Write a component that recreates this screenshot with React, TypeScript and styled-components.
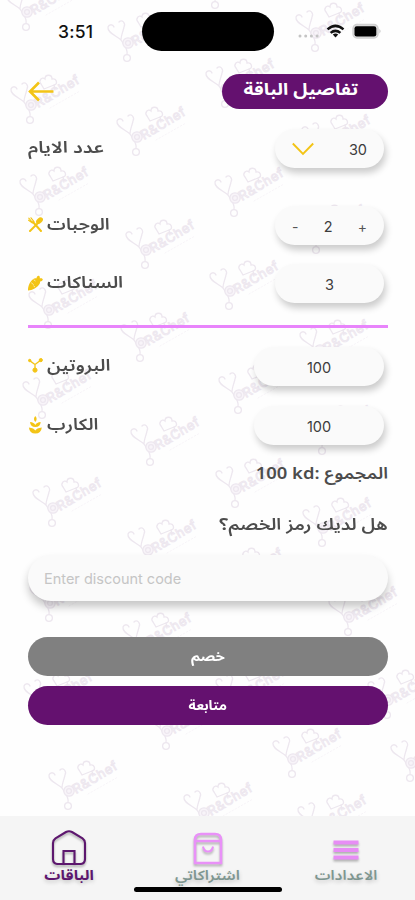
import React from "react";
import styled, { createGlobalStyle } from "styled-components";

const ARABIC = '"Noto Sans Arabic", "Noto Sans", sans-serif';

const GlobalStyle = createGlobalStyle`
  * { box-sizing: border-box; }
  body { margin: 0; background: #fff; }
  button, input { font: inherit; border: 0; padding: 0; }
`;

const Screen = styled.div`
  position: relative;
  width: 415px;
  height: 900px;
  overflow: hidden;
  display: flex;
  flex-direction: column;
  background: #fefefe;
  font-family: Inter, "Liberation Sans", sans-serif;
  color: #444;
`;

const Pattern = styled.svg`
  position: absolute;
  inset: 0;
  width: 415px;
  height: 900px;
  pointer-events: none;
`;

const StatusBar = styled.div`
  position: relative;
  display: grid;
  grid-template-columns: 142px 132px 1fr;
  align-items: center;
  height: 39px;
  margin-top: 12px;
`;

const Time = styled.div`
  padding-left: 58px;
  font-size: 17.5px;
  font-weight: 500;
  letter-spacing: 0.2px;
  color: #111;
`;

const Island = styled.div`
  height: 39px;
  border-radius: 20px;
  background: #000;
`;

const StatusIcons = styled.div`
  padding-left: 24px;
  height: 39px;
`;

const Content = styled.main`
  position: relative;
  flex: 1;
  display: flex;
  flex-direction: column;
  padding: 23px 27px 0 28px;
`;

const Header = styled.header`
  display: flex;
  justify-content: space-between;
  height: 35px;
  margin-bottom: 20px;
`;

const BackButton = styled.button`
  width: 27px;
  height: 35px;
  background: none;
`;

const TitlePill = styled.h1`
  margin: 0;
  width: 166px;
  height: 35px;
  padding-right: 9px;
  border-radius: 18px;
  background: #64116f;
  color: #fff;
  display: flex;
  justify-content: center;
  align-items: center;
`;

const Fit = styled.span<{ $size: number; $x?: number; $up?: number; $origin?: string; $weight?: number }>`
  display: inline-block;
  direction: rtl;
  white-space: nowrap;
  font-family: ${ARABIC};
  font-size: ${(p) => p.$size}px;
  font-weight: ${(p) => p.$weight ?? 600};
  line-height: 26px;
  transform: translateY(${(p) => -(p.$up ?? 0)}px) scaleX(${(p) => p.$x ?? 1});
  transform-origin: ${(p) => p.$origin ?? "center"};
`;

const Row = styled.div<{ $gap: number }>`
  display: flex;
  justify-content: space-between;
  height: 39px;
  padding-right: 4px;
  margin-bottom: ${(p) => p.$gap}px;
`;

const Label = styled.div`
  display: flex;
  align-items: center;
  gap: 4px;
  height: 37px;
  color: #4c4c4c;
  svg { flex: none; }
`;

const Pill = styled.div<{ $wide?: boolean; $spread?: boolean }>`
  display: flex;
  align-items: center;
  justify-content: ${(p) => (p.$spread ? "space-between" : "center")};
  width: ${(p) => (p.$wide ? 130 : 109)}px;
  height: 39px;
  padding: 1px 17px 0;
  border-radius: 20px;
  background: #fafafa;
  box-shadow: 2px 5px 7px rgba(0, 0, 0, 0.2);
  font-size: 14.5px;
  color: #3c3c3c;
`;

const Step = styled.button`
  background: none;
  color: #555;
  font-size: 14px;
`;

const Divider = styled.hr`
  width: 360px;
  height: 3px;
  margin: 0 0 19px;
  border: 0;
  flex: none;
  background: #e884fb;
`;

const Line = styled.div<{ $gap: number }>`
  display: flex;
  justify-content: flex-end;
  align-items: center;
  height: 26px;
  margin-bottom: ${(p) => p.$gap}px;
  color: #4c4c4c;
`;

const CodeInput = styled.input`
  width: 360px;
  height: 46px;
  padding: 0 16px;
  margin-bottom: 36px;
  border-radius: 23px;
  background: #fafafa;
  box-shadow: 0 6px 8px rgba(0, 0, 0, 0.22);
  font-size: 14.5px;
  outline: none;
  &::placeholder { color: #c5c5c5; opacity: 1; }
`;

const Action = styled.button<{ $color: string }>`
  width: 360px;
  height: 39px;
  margin-bottom: 10px;
  border-radius: 20px;
  background: ${(p) => p.$color};
  color: #fff;
`;

const TabBar = styled.nav`
  position: relative;
  display: grid;
  grid-template-columns: repeat(3, 138.5px);
  height: 84px;
  background: #f5f5f5;
`;

const Tab = styled.a<{ $color: string }>`
  display: flex;
  flex-direction: column;
  align-items: center;
  padding-top: 13px;
  color: ${(p) => p.$color};
  text-shadow: 0 2px 4px rgba(0, 0, 0, 0.2);
  svg { filter: drop-shadow(0 2px 1px rgba(0, 0, 0, 0.28)); flex: none; }
`;

const HomeIndicator = styled.div`
  position: absolute;
  left: 134px;
  bottom: 8px;
  width: 148px;
  height: 5px;
  border-radius: 3px;
  background: #000;
`;

const marks: [number, number][] = [
  [26, 27], [127, 58], [215, 5], [315, 48], [30, 120], [225, 104], [136, 152], [321, 160],
  [39, 212], [234, 213], [145, 265], [316, 250], [229, 306], [48, 325], [140, 358], [319, 365],
  [42, 415], [238, 410], [150, 462], [322, 451], [52, 523], [235, 504], [147, 565], [322, 543],
  [49, 618], [233, 593], [142, 658], [348, 632], [43, 717], [235, 712], [166, 746], [387, 715],
  [292, 774], [410, 778], [68, 806], [203, 828], [317, 840],
];

function Watermark() {
  return (
    <Pattern viewBox="0 0 415 900">
      <defs>
        <g id="mark" fill="none" stroke="#ede7ef" strokeWidth="1.3" strokeLinecap="round">
          <circle cx="0" cy="0" r="3.4" />
          <path d="M0-4C1-10-3-13-6-18M-8-36C-5-39-1-35-3-31C-4-26-6-23-6-18C-10-22-20-25-19-31C-18-34-14-34-13-31" />
          <circle cx="1" cy="-15" r="5.2" fill="#f8f4f9" />
          <circle cx="1" cy="-15" r="2.4" />
          <path d="M14-31L11-36C8-39 12-44 15-41C15-46 22-46 22-41C27-42 28-36 24-35L25-30M14-31L24-35" />
          <text transform="translate(8 -12) rotate(-31)" fontFamily="Inter" fontSize="13" letterSpacing="0.6" strokeWidth=".9" fill="#fbf9fb">R&amp;Chef</text>
          <path d="M20-12L50-29" strokeWidth=".4" strokeDasharray="1.5 2" />
        </g>
      </defs>
      {marks.map(([x, y]) => <use key={`${x}-${y}`} href="#mark" x={x} y={y} />)}
    </Pattern>
  );
}

const GOLD = "#f3c416";

const Utensils = () => (
  <svg width="15" height="15" viewBox="0 0 15 15" fill={GOLD} stroke={GOLD}>
    <path d="M2 14L10 6" strokeWidth="2" strokeLinecap="round" />
    <ellipse cx="11.5" cy="3.6" rx="3.9" ry="2.6" transform="rotate(-42 11.5 3.6)" stroke="none" />
    <path d="M5 5L13 14" strokeWidth="2" strokeLinecap="round" />
    <path d="M.8 1.2L5 6M3 .8L6 4.6M.6 3.2L4.4 6" strokeWidth="1.1" strokeLinecap="round" />
  </svg>
);

const Carrot = () => (
  <svg width="15" height="16" viewBox="0 0 15 16" fill={GOLD}>
    <path d="M0 15.5C-.3 11 2.5 5.4 6.3 3.6C10 2 13.5 5.8 11.5 9C9.3 12.4 4.5 15.3 0 15.5Z" />
    <path d="M8.5 4.6C8-.4 12.7-.4 11.7 3.3C16 2.3 15.8 6.7 11 6.8Z" />
    <path d="M3.2 7.7L5.7 9.7M7 12L5.4 10.8M5.7 4.7L7.5 6" stroke="#fff" strokeWidth=".6" />
  </svg>
);

const Molecule = () => (
  <svg width="15" height="15" viewBox="0 0 15 15" fill={GOLD} stroke={GOLD}>
    <path d="M1.6 2.6L7 6.5L13 2M7 6.5V12" strokeWidth="1.3" fill="none" />
    <circle cx="1.7" cy="2.5" r="1.2" />
    <circle cx="12.8" cy="2.1" r="1.6" />
    <circle cx="7" cy="12.1" r="2.1" />
  </svg>
);

const Grain = () => (
  <svg width="15" height="18" viewBox="0 0 15 18" fill={GOLD}>
    <path d="M7.3 0Q10 3.2 7.3 6Q4.6 3.2 7.3 0Z" />
    <path d="M2 6Q6 6.4 7.3 9Q8.6 6.4 12.7 6Q12.4 11 7.3 11Q2.4 11 2 6Z" />
    <path d="M.9 11.5Q6 12 7.3 14.5Q8.6 12 13.8 11.5Q13.2 17.5 7.3 17.5Q1.5 17.5.9 11.5Z" />
  </svg>
);

export default function App() {
  return (
    <Screen>
      <GlobalStyle />
      <Watermark />
      <StatusBar>
        <Time>3:51</Time>
        <Island />
        <StatusIcons>
          <svg width="86" height="39" viewBox="298 12 86 39">
            <g fill="#c4c4c4">
              <circle cx="300" cy="36" r="1.5" /><circle cx="305.7" cy="36" r="1.5" />
              <circle cx="311.4" cy="36" r="1.5" /><circle cx="317.1" cy="36" r="1.5" />
            </g>
            <g fill="none" stroke="#111" strokeWidth="2.5">
              <path d="M327.5 29.4Q335.5 22.4 343.5 29.4" />
              <path d="M330.6 32.9Q335.5 28.8 340.4 32.9" />
            </g>
            <path d="M332.8 34.6Q335.5 32.6 338.2 34.6L335.5 37.4Z" fill="#111" />
            <rect x="353" y="24.5" width="25" height="13.5" rx="4" fill="#ddd" stroke="#d0d0d0" strokeWidth="1.4" />
            <rect x="354.5" y="26.2" width="21.8" height="10.2" rx="2.2" fill="#000" />
            <path d="M379.5 29V33.5Q381.5 31.2 379.5 29" fill="#bbb" />
          </svg>
        </StatusIcons>
      </StatusBar>
      <Content>
        <Header>
          <BackButton aria-label="back">
            <svg width="27" height="35" viewBox="0 0 27 35" fill="none" stroke={GOLD} strokeWidth="2.6">
              <path d="M25.5 17.5H2M11 8.5L2 17.5L11 26.5" />
            </svg>
          </BackButton>
          <TitlePill>
            <Fit $size={16} $up={2} $x={1.2} $weight={700}>تفاصيل الباقة</Fit>
          </TitlePill>
        </Header>
        <Row $gap={38}>
          <Label><Fit $size={16} $x={1.22} $origin="left">عدد الايام</Fit></Label>
          <Pill $spread>
            <svg width="22" height="14" viewBox="0 0 22 14" fill="none" stroke={GOLD} strokeWidth="1.9">
              <path d="M.8 1.5L11 12L21.2 1.5" />
            </svg>
            <span>30</span>
          </Pill>
        </Row>
        <Row $gap={19}>
          <Label><Utensils /><Fit $size={16} $x={1.17} $origin="left">الوجبات</Fit></Label>
          <Pill $spread>
            <Step>-</Step><span>2</span><Step>+</Step>
          </Pill>
        </Row>
        <Row $gap={22}>
          <Label><Carrot /><Fit $size={16} $x={1.21} $origin="left">السناكات</Fit></Label>
          <Pill>3</Pill>
        </Row>
        <Divider />
        <Row $gap={20}>
          <Label><Molecule /><Fit $size={16} $x={1.19} $origin="left">البروتين</Fit></Label>
          <Pill $wide>100</Pill>
        </Row>
        <Row $gap={17}>
          <Label><Grain /><Fit $size={16} $x={1.16} $origin="left">الكارب</Fit></Label>
          <Pill $wide>100</Pill>
        </Row>
        <Line $gap={24}><Fit $size={16} $x={1.15} $up={1} $origin="right">المجموع :<bdi dir="ltr">100 kd</bdi></Fit></Line>
        <Line $gap={17}><Fit $size={16} $x={1.18} $origin="right">هل لديك رمز الخصم؟</Fit></Line>
        <CodeInput placeholder="Enter discount code" />
        <Action $color="#808080"><Fit $size={13} $x={1.14} $weight={700}>خصم</Fit></Action>
        <Action $color="#64116f"><Fit $size={13} $x={1.08} $weight={700}>متابعة</Fit></Action>
      </Content>
      <TabBar>
        <Tab $color="#5d176e">
          <svg width="38" height="36" viewBox="0 0 38 36" fill="none" stroke="currentColor" strokeWidth="2.1">
            <path d="M3 14Q3 11 5.5 9.3L16 3Q19 1.4 22 3L32.5 9.3Q35 11 35 14V30Q35 35 30 35H8Q3 35 3 30ZM13.5 35V22H24.5V35" />
          </svg>
          <Fit $size={13.5} $x={1.18} $up={2} $weight={700}>الباقات</Fit>
        </Tab>
        <Tab $color="#7e9690">
          <svg width="38" height="36" viewBox="0 0 38 36" fill="none" stroke="#e991f8">
            <path d="M6 11Q6 5 12 5H26Q32 5 32 11V34H6ZM6 12H32" strokeWidth="2.6" />
            <path d="M14 17.5Q14.7 22.5 19 22.5Q23.3 22.5 24 17.5" strokeWidth="2" />
          </svg>
          <Fit $size={13.5} $x={1.18} $up={2}>اشتراكاتي</Fit>
        </Tab>
        <Tab $color="#7e9690">
          <svg width="38" height="36" viewBox="0 0 38 36" stroke="#e78df5" strokeWidth="4">
            <path d="M6.5 13.5H31.5M6.5 21H31.5M6.5 28.5H31.5" />
          </svg>
          <Fit $size={13.5} $x={1.16} $up={2}>الاعدادات</Fit>
        </Tab>
        <HomeIndicator />
      </TabBar>
    </Screen>
  );
}
